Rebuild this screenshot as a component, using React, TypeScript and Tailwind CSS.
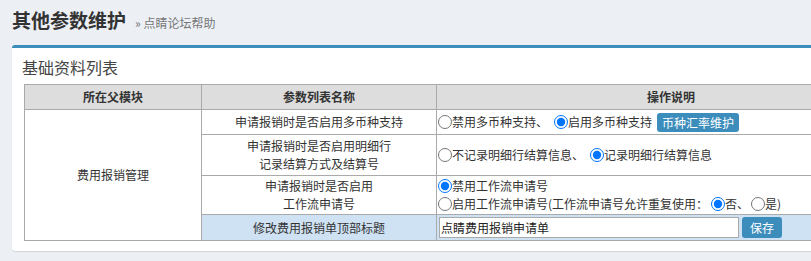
import React from "react";

const font = { fontFamily: '"Noto Sans CJK SC", "Noto Sans", sans-serif' };

function Radio({ checked, name, className = "" }: { checked?: boolean; name: string; className?: string }) {
  return (
    <input
      type="radio"
      name={name}
      defaultChecked={checked}
      className={"m-0 w-[14px] h-[14px] shrink-0 " + className}
    />
  );
}

export default function App() {
  return (
    <div
      className="w-[811px] h-[261px] overflow-hidden bg-[#ecf0f5] text-[#333]"
      style={font}
    >
      <div className="pt-[8px] pl-[12px] flex items-baseline">
        <h1 className="text-[19px] leading-[24px] font-bold text-[#333]">其他参数维护</h1>
        <span className="ml-[9px] text-[12px] text-[#777]">» 点睛论坛帮助</span>
      </div>
      <div className="ml-[12px] mt-[13px] w-[860px] bg-white border-t-[3px] border-[#3c8dbc] rounded-[3px] shadow-[0_1px_1px_rgba(0,0,0,0.12)] pb-[10px]">
        <div className="pt-[8px] pl-[10px] text-[16px] leading-[22px] text-[#444]">基础资料列表</div>
        <div className="pl-[12px] mt-[6px]">
          <table className="border-collapse text-[12px] leading-[18px] text-[#333]">
            <thead>
              <tr className="h-[25px] bg-[#dddddd]">
                <th className="border border-[#aaa] w-[177px] font-bold">所在父模块</th>
                <th className="border border-[#aaa] w-[235px] font-bold">参数列表名称</th>
                <th className="border border-[#aaa] w-[420px] font-bold text-left pl-[210px]">操作说明</th>
              </tr>
            </thead>
            <tbody>
              <tr className="h-[25px]">
                <td rowSpan={4} className="border border-[#aaa] text-center align-middle bg-white">费用报销管理</td>
                <td className="border border-[#aaa] text-center">申请报销时是否启用多币种支持</td>
                <td className="border border-[#aaa] p-0">
                  <div className="flex items-center pl-[1px]">
                    <Radio name="r1" />
                    <span>禁用多币种支持、</span>
                    <Radio name="r1" checked className="ml-[6px]" />
                    <span>启用多币种支持</span>
                    <button className="ml-[5px] h-[19px] w-[82px] rounded-[3px] bg-[#3c8dbc] text-white text-[12px] leading-[19px]">币种汇率维护</button>
                  </div>
                </td>
              </tr>
              <tr className="h-[41px]">
                <td className="border border-[#aaa] text-center">申请报销时是否启用明细行<br />记录结算方式及结算号</td>
                <td className="border border-[#aaa] p-0">
                  <div className="flex items-center pl-[1px]">
                    <Radio name="r2" />
                    <span>不记录明细行结算信息、</span>
                    <Radio name="r2" checked className="ml-[6px]" />
                    <span>记录明细行结算信息</span>
                  </div>
                </td>
              </tr>
              <tr className="h-[39px]">
                <td className="border border-[#aaa] text-center">申请报销时是否启用<br />工作流申请号</td>
                <td className="border border-[#aaa] p-0">
                  <div className="flex flex-col pl-[1px]">
                    <div className="flex items-center h-[18px]">
                      <Radio name="r3" checked />
                      <span>禁用工作流申请号</span>
                    </div>
                    <div className="flex items-center h-[18px]">
                      <Radio name="r3" />
                      <span>启用工作流申请号(工作流申请号允许重复使用：</span>
                      <Radio name="r4" checked className="ml-[3px]" />
                      <span>否、</span>
                      <Radio name="r4" className="ml-[2px]" />
                      <span>是)</span>
                    </div>
                  </div>
                </td>
              </tr>
              <tr className="h-[26px] bg-[#cfe2f3]">
                <td className="border border-[#aaa] text-center">修改费用报销单顶部标题</td>
                <td className="border border-[#aaa] p-0">
                  <div className="flex items-center pl-[2px]">
                    <input
                      type="text"
                      defaultValue="点睛费用报销申请单"
                      className="w-[300px] h-[21px] bg-white border border-[#aaa] px-[1px] text-[12px] text-[#222] outline-none"
                      style={font}
                    />
                    <button className="ml-[3px] h-[21px] w-[40px] rounded-[3px] bg-[#3c8dbc] text-white text-[12px]">保存</button>
                  </div>
                </td>
              </tr>
            </tbody>
          </table>
        </div>
      </div>
    </div>
  );
}
